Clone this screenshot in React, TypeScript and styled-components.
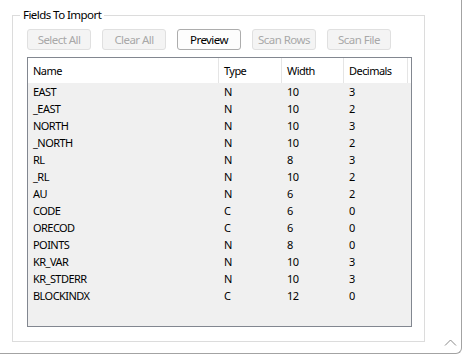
import React from 'react';
import styled, { createGlobalStyle } from 'styled-components';

const GlobalStyle = createGlobalStyle`
  html, body {
    margin: 0;
    padding: 0;
    background: #ffffff;
  }
  body {
    font-family: "Noto Sans", "Liberation Sans", Arial, sans-serif;
    font-size: 11px;
    letter-spacing: -0.55px;
    color: #000000;
  }
`;

const Frame = styled.div`
  position: relative;
  box-sizing: border-box;
  width: 462px;
  height: 354px;
  border-right: 1px solid #a3a3a3;
  border-bottom: 1px solid #a3a3a3;
  border-bottom-right-radius: 6px;
  padding: 15px 0 0 12px;
`;

const GroupBox = styled.div`
  position: relative;
  box-sizing: border-box;
  width: 413px;
  height: 327px;
  border: 1px solid #dcdcdc;
  padding: 13px 0 0 14px;
  display: flex;
  flex-direction: column;
  gap: 7px;
`;

const Legend = styled.span`
  position: absolute;
  top: -9px;
  left: 7px;
  padding: 0 3px;
  background: #ffffff;
  font-size: 11.5px;
  line-height: 16px;
`;

const Toolbar = styled.div`
  display: flex;
  gap: 11px;
`;

const Button = styled.button<{ $enabled?: boolean }>`
  box-sizing: border-box;
  width: 64px;
  height: 21px;
  padding: 0;
  border-radius: 3px;
  font-family: inherit;
  font-size: 11.5px;
  letter-spacing: -0.55px;
  border: 1px solid ${p => (p.$enabled ? '#adadad' : '#e0e0e0')};
  background: ${p => (p.$enabled ? '#fdfdfd' : '#f4f4f4')};
  color: ${p => (p.$enabled ? '#000000' : '#a8a8a8')};
`;

const Table = styled.div`
  box-sizing: border-box;
  width: 385px;
  height: 270px;
  border: 1px solid #828790;
  background: #f0f0f0;
`;

const Row = styled.div<{ $header?: boolean }>`
  display: grid;
  grid-template-columns: 191px 63px 62px 64px 1fr;
  height: ${p => (p.$header ? '25px' : '17px')};
  background: ${p => (p.$header ? '#ffffff' : 'transparent')};
  align-items: center;
`;

const Cell = styled.div<{ $header?: boolean }>`
  box-sizing: border-box;
  height: 100%;
  display: flex;
  align-items: center;
  padding-left: 5px;
  border-right: ${p => (p.$header ? '1px solid #e5e5e5' : 'none')};
  white-space: nowrap;
`;

const Grip = styled.svg`
  position: absolute;
  right: 4px;
  bottom: 7px;
`;

const fields: [string, string, number, number][] = [
  ['EAST', 'N', 10, 3],
  ['_EAST', 'N', 10, 2],
  ['NORTH', 'N', 10, 3],
  ['_NORTH', 'N', 10, 2],
  ['RL', 'N', 8, 3],
  ['_RL', 'N', 10, 2],
  ['AU', 'N', 6, 2],
  ['CODE', 'C', 6, 0],
  ['ORECOD', 'C', 6, 0],
  ['POINTS', 'N', 8, 0],
  ['KR_VAR', 'N', 10, 3],
  ['KR_STDERR', 'N', 10, 3],
  ['BLOCKINDX', 'C', 12, 0],
];

export default function App() {
  return (
    <>
      <GlobalStyle />
      <Frame>
        <GroupBox>
          <Legend>Fields To Import</Legend>
          <Toolbar>
            <Button disabled>Select All</Button>
            <Button disabled>Clear All</Button>
            <Button $enabled>Preview</Button>
            <Button disabled>Scan Rows</Button>
            <Button disabled>Scan File</Button>
          </Toolbar>
          <Table>
            <Row $header>
              <Cell $header>Name</Cell>
              <Cell $header>Type</Cell>
              <Cell $header>Width</Cell>
              <Cell $header>Decimals</Cell>
              <div />
            </Row>
            {fields.map(([name, type, width, decimals]) => (
              <Row key={name}>
                <Cell>{name}</Cell>
                <Cell>{type}</Cell>
                <Cell>{width}</Cell>
                <Cell>{decimals}</Cell>
                <div />
              </Row>
            ))}
          </Table>
        </GroupBox>
        <Grip width="13" height="7" viewBox="0 0 13 7">
          <polyline points="1,6.5 6.5,1 12,6.5" fill="none" stroke="#8a8a8a" strokeWidth="1" />
        </Grip>
      </Frame>
    </>
  );
}
